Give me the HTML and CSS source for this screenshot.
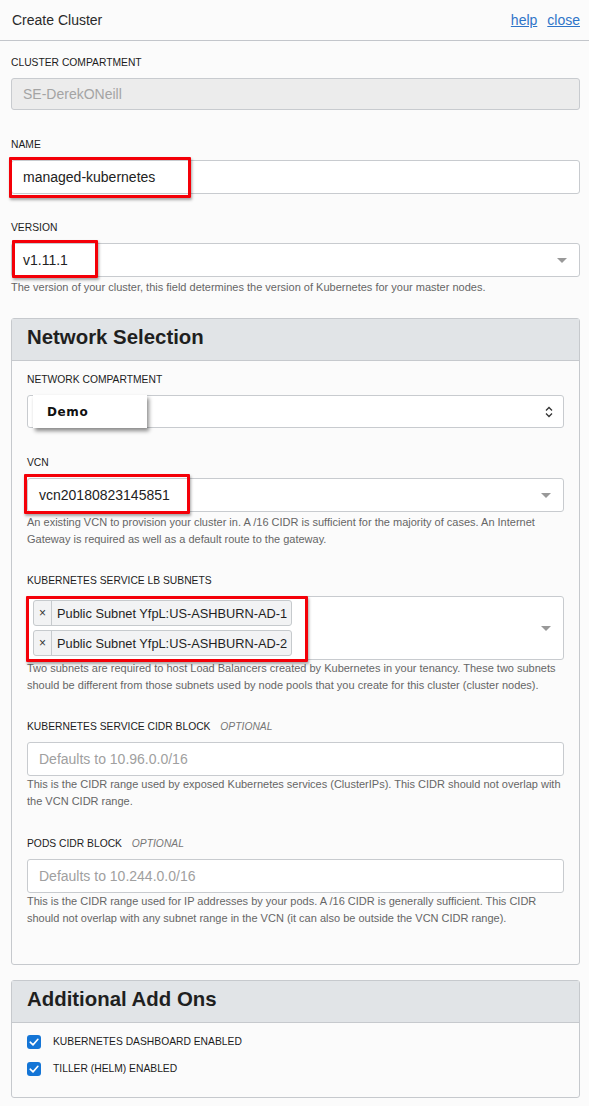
FILE: index.html
```html
<!DOCTYPE html>
<html lang="en">
<head>
<meta charset="utf-8">
<title>Create Cluster</title>
<link rel="stylesheet" href="styles.css">
</head>
<body>
<header class="topbar">
  <h1 class="title">Create Cluster</h1>
  <nav class="links"><a href="#">help</a><a href="#">close</a></nav>
</header>
<main class="form">
  <div class="field">
    <label class="label">Cluster Compartment</label>
    <div class="control disabled h32">SE-DerekONeill</div>
  </div>
  <div class="field f27">
    <label class="label">Name</label>
    <div class="control">managed-kubernetes<span class="mark mark-name"></span></div>
  </div>
  <div class="field last">
    <label class="label">Version</label>
    <div class="control select">v1.11.1<span class="caret"></span><span class="mark mark-version"></span></div>
    <p class="help">The version of your cluster, this field determines the version of Kubernetes for your master nodes.</p>
  </div>

  <section class="panel">
    <h2 class="panel-head">Network Selection</h2>
    <div class="panel-body net">
      <div class="field f28">
        <label class="label">Network Compartment</label>
        <div class="control select h33">
          <span></span>
          <svg class="updown" width="8" height="12" viewBox="0 0 8 12"><path d="M1 4.5 L4 1.5 L7 4.5 M1 7.5 L4 10.5 L7 7.5" fill="none" stroke="#333" stroke-width="1.3"/></svg>
          <div class="popup">Demo</div>
        </div>
      </div>
      <div class="field f26">
        <label class="label">VCN</label>
        <div class="control select">vcn20180823145851<span class="caret"></span><span class="mark mark-vcn"></span></div>
        <p class="help">An existing VCN to provision your cluster in. A /16 CIDR is sufficient for the majority of cases. An Internet Gateway is required as well as a default route to the gateway.</p>
      </div>
      <div class="field f26">
        <label class="label">Kubernetes Service LB Subnets</label>
        <div class="control multi">
          <div class="chips">
            <span class="chip"><span class="chip-x">×</span><span class="chip-text">Public Subnet YfpL:US-ASHBURN-AD-1</span></span>
            <span class="chip"><span class="chip-x">×</span><span class="chip-text">Public Subnet YfpL:US-ASHBURN-AD-2</span></span>
          </div>
          <span class="caret"></span>
          <span class="mark mark-subnets"></span>
        </div>
        <p class="help help-tight">Two subnets are required to host Load Balancers created by Kubernetes in your tenancy. These two subnets should be different from those subnets used by node pools that you create for this cluster (cluster nodes).</p>
      </div>
      <div class="field f27">
        <label class="label">Kubernetes Service CIDR Block <em class="optional">Optional</em></label>
        <div class="control placeholder">Defaults to 10.96.0.0/16</div>
        <p class="help help-tight">This is the CIDR range used by exposed Kubernetes services (ClusterIPs). This CIDR should not overlap with the VCN CIDR range.</p>
      </div>
      <div class="field last">
        <label class="label">Pods CIDR Block <em class="optional">Optional</em></label>
        <div class="control placeholder">Defaults to 10.244.0.0/16</div>
        <p class="help help-tight">This is the CIDR range used for IP addresses by your pods. A /16 CIDR is generally sufficient. This CIDR should not overlap with any subnet range in the VCN (it can also be outside the VCN CIDR range).</p>
      </div>
    </div>
  </section>

  <section class="panel addons">
    <h2 class="panel-head">Additional Add Ons</h2>
    <div class="panel-body checks">
      <label class="check"><span class="box"><svg width="14" height="14" viewBox="0 0 14 14"><path d="M3.2 7.2 L6 9.9 L10.9 4.3" fill="none" stroke="#fff" stroke-width="1.6" stroke-linecap="round" stroke-linejoin="round"/></svg></span>Kubernetes Dashboard Enabled</label>
      <label class="check"><span class="box"><svg width="14" height="14" viewBox="0 0 14 14"><path d="M3.2 7.2 L6 9.9 L10.9 4.3" fill="none" stroke="#fff" stroke-width="1.6" stroke-linecap="round" stroke-linejoin="round"/></svg></span>Tiller (Helm) Enabled</label>
    </div>
  </section>
</main>
</body>
</html>
```

FILE: styles.css
```css
* { box-sizing: border-box; }
html, body { margin: 0; padding: 0; }
body {
  background: #fbfbfb;
  font-family: "Liberation Sans", Arial, Helvetica, sans-serif;
  color: #222;
  width: 589px;
}
.topbar {
  height: 41px;
  border-bottom: 1px solid #c3c6cb;
  display: flex;
  align-items: center;
  justify-content: space-between;
  padding: 0 9px 1px 12px;
}
.title {
  margin: 0;
  font-size: 14px;
  font-weight: normal;
  color: #2a2a2a;
}
.links { display: flex; gap: 10px; }
.links a {
  font-size: 14px;
  color: #2f74c8;
  text-decoration: underline;
}
.form {
  padding: 15px 9px 0 11px;
}
.field { margin-bottom: 28px; }
.field.last { margin-bottom: 0; }
.field.f28 { margin-bottom: 28px; }
.field.f27 { margin-bottom: 27px; }
.field.f26 { margin-bottom: 26px; }
.label {
  display: block;
  font-size: 10.3px;
  line-height: 12px;
  padding-top: 1px;
  text-transform: uppercase;
  color: #1c1c1c;
  margin-bottom: 9px;
}
.optional {
  color: #777;
  font-style: italic;
  margin-left: 7px;
}
.control {
  position: relative;
  height: 34px;
  background: #fff;
  border: 1px solid #c8cbcf;
  border-radius: 3px;
  font-size: 14px;
  color: #222;
  display: flex;
  align-items: center;
  padding: 0 12px 0 11px;
}
.control.h32 { height: 32px; }
.control.h33 { height: 33px; }
.control.disabled {
  background: #ececec;
  color: #a4a4a4;
}
.control.placeholder { color: #a0a0a0; }
.control.select { justify-content: space-between; }
.caret {
  width: 0;
  height: 0;
  border-left: 5px solid transparent;
  border-right: 5px solid transparent;
  border-top: 5px solid #999;
  margin-left: auto;
}
.updown { margin-left: auto; margin-right: -2px; }
.popup {
  position: absolute;
  left: 5px;
  top: -1px;
  width: 114px;
  height: 33px;
  background: #fff;
  box-shadow: 2px 3px 4px rgba(0,0,0,0.45);
  font-family: "DejaVu Sans", sans-serif;
  font-weight: bold;
  font-size: 12px;
  letter-spacing: 0.6px;
  color: #111;
  display: flex;
  align-items: center;
  padding-left: 14px;
}
.help {
  margin: 2px 0 0;
  font-size: 11px;
  line-height: 17px;
  color: #666;
}
.help-tight { margin-top: 0; }
.mark {
  position: absolute;
  border: 3px solid #f40008;
  box-shadow: 1px 2px 3px rgba(0,0,0,0.35);
  border-radius: 1px;
  pointer-events: none;
}
.mark-name { left: -3px; top: -4px; width: 182px; height: 41px; }
.mark-version { left: 0; top: -4px; width: 86px; height: 38px; }
.mark-vcn { left: -4px; top: -5px; width: 166px; height: 40px; }
.mark-subnets { left: -2px; top: -1px; width: 282px; height: 66px; }
.panel {
  border: 1px solid #c6c9cd;
  border-radius: 3px;
  background: #fbfbfb;
  margin-top: 22px;
}
.panel-head {
  margin: 0;
  height: 42px;
  background: #e1e4e7;
  border-bottom: 1px solid #c6c9cd;
  font-size: 20.4px;
  font-weight: bold;
  color: #1f1f1f;
  display: flex;
  align-items: center;
  padding: 0 15px 4px;
}
.panel-body { padding: 12px 15px 37px; }
.control.multi {
  height: 64px;
  padding: 4px 12px 4px 5px;
  align-items: center;
}
.chips {
  display: flex;
  flex-direction: column;
  align-items: flex-start;
  gap: 4px;
  flex-shrink: 0;
}
.chip {
  display: flex;
  align-items: stretch;
  height: 26px;
  border: 1px solid #c6cacd;
  border-radius: 3px;
  background: #f2f3f4;
  white-space: nowrap;
}
.chip-x {
  width: 18px;
  border-right: 1px solid #c6cacd;
  display: flex;
  align-items: center;
  justify-content: center;
  font-size: 12px;
  color: #333;
}
.chip-text {
  display: flex;
  align-items: center;
  padding: 0 4px 0 5px;
  font-size: 12.8px;
  color: #1f1f1f;
}
.addons { margin-top: 15px; }
.panel-body.checks { padding: 5px 15px 15px; }
.check {
  display: flex;
  align-items: center;
  height: 27px;
  font-size: 10.3px;
  text-transform: uppercase;
  color: #1c1c1c;
}
.box {
  width: 14px;
  height: 14px;
  border-radius: 3px;
  background: #1475d6;
  margin-right: 12px;
  display: flex;
}
```
